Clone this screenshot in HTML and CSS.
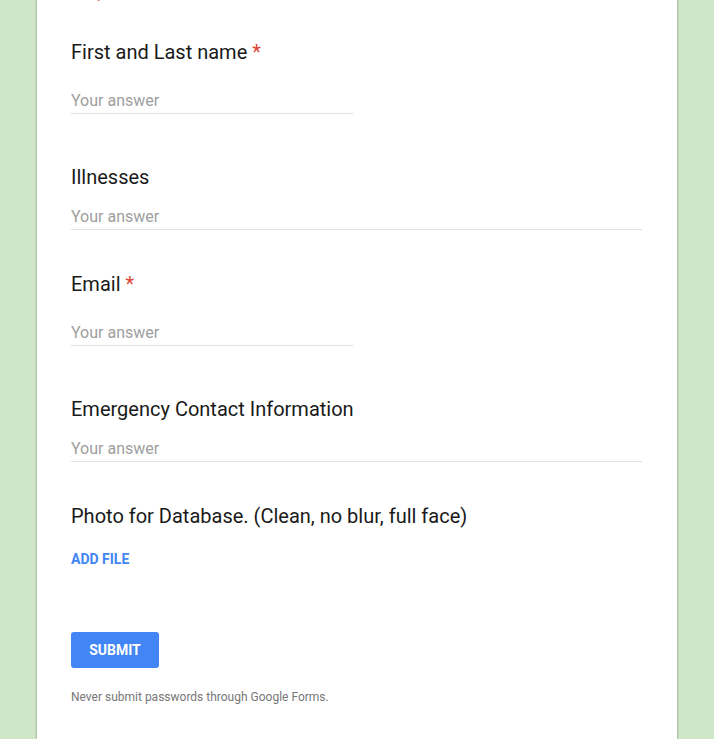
FILE: index.html
```html
<!DOCTYPE html>
<html lang="en">
<head>
  <meta charset="UTF-8" />
  <meta name="viewport" content="width=device-width, initial-scale=1.0"/>
  <title>Registration</title>
  <link rel="stylesheet" href="styles.css">
</head>
<body>

  <form class="card">
    <p class="required-note">* Required</p>

    <div class="question short">
      <label class="title">First and Last name <span class="star">*</span></label>
      <input class="answer" type="text" placeholder="Your answer">
    </div>

    <div class="question">
      <label class="title">Illnesses</label>
      <input class="answer" type="text" placeholder="Your answer">
    </div>

    <div class="question short">
      <label class="title">Email <span class="star">*</span></label>
      <input class="answer" type="text" placeholder="Your answer">
    </div>

    <div class="question">
      <label class="title">Emergency Contact Information</label>
      <input class="answer" type="text" placeholder="Your answer">
    </div>

    <div class="question upload">
      <label class="title">Photo for Database. (Clean, no blur, full face)</label>
      <span class="add-file">Add file</span>
    </div>

    <button class="submit" type="button">Submit</button>

    <p class="small-text">Never submit passwords through Google Forms.</p>
  </form>

</body>
</html>
```

FILE: styles.css
```css
body {
  margin: 0;
  background-color: #cfe7c8;
  font-family: 'Roboto', 'Liberation Sans', sans-serif;
  overflow: hidden;
}
.card {
  width: 571px;
  min-height: 756px;
  margin: -17px auto 0;
  padding: 0 35px 0 34px;
  background-color: #fff;
  box-shadow: 0 0 2px rgba(0, 0, 0, 0.35), 0 1px 3px rgba(0, 0, 0, 0.15);
}
.required-note {
  margin: 0 0 37px -4px;
  font-size: 14px;
  line-height: 20px;
  color: #db4437;
}
.question {
  display: flex;
  flex-direction: column;
  align-items: flex-start;
  margin-bottom: 42px;
}
.title {
  font-size: 20px;
  line-height: 24px;
  color: #1a1a1a;
  margin-bottom: 16px;
}
.star {
  color: #db4437;
}
.answer {
  box-sizing: content-box;
  width: 100%;
  height: 23px;
  padding: 0 0 1px;
  border: none;
  border-bottom: 1px solid #e0e0e0;
  font-family: inherit;
  font-size: 16px;
  color: #202020;
  outline: none;
}
.answer::placeholder {
  color: #9e9e9e;
}
.short .answer {
  width: 282px;
  margin: 9px 0;
}
.upload .title {
  margin-bottom: 21px;
}
.add-file {
  font-size: 14px;
  line-height: 20px;
  font-weight: bold;
  text-transform: uppercase;
  color: #4285f4;
}
.upload {
  margin-bottom: 63px;
}
.submit {
  display: block;
  width: 88px;
  height: 36px;
  border: none;
  border-radius: 3px;
  background-color: #4285f4;
  color: white;
  font-family: inherit;
  font-size: 14px;
  font-weight: bold;
  text-transform: uppercase;
  cursor: pointer;
}
.small-text {
  margin: 21px 0 0;
  font-size: 12px;
  line-height: 16px;
  color: #777;
}
```
